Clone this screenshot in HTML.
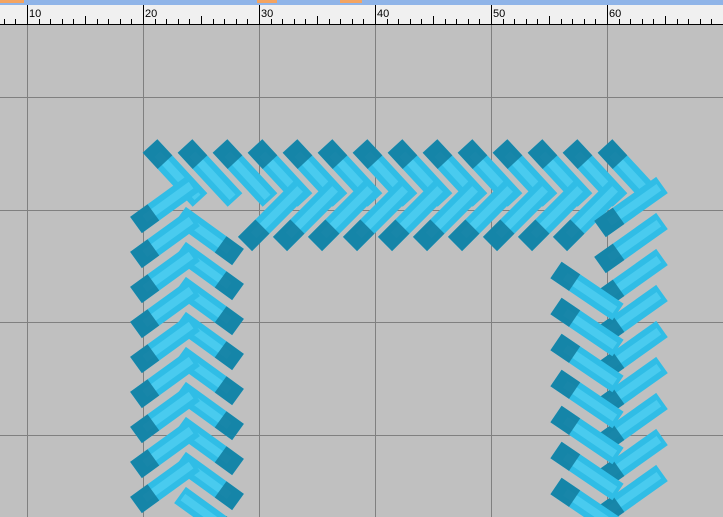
<!DOCTYPE html><html><head><style>
html,body{margin:0;padding:0;width:723px;height:517px;overflow:hidden;background:#c0c0c0}
svg{display:block}
</style></head><body>
<svg id="s" width="723" height="517" xmlns="http://www.w3.org/2000/svg" font-family="Liberation Sans, sans-serif">
<rect x="0" y="0" width="723" height="5" fill="#8fb4e8"/>
<rect x="0" y="5" width="723" height="20" fill="#f0f0f0"/>
<line x1="0" y1="24.5" x2="723" y2="24.5" stroke="#000"/>
<rect x="0" y="0" width="24" height="3" fill="#f4a460"/>
<rect x="257" y="0" width="20" height="3" fill="#f4a460"/>
<rect x="340" y="0" width="22" height="3" fill="#f4a460"/>
<g id="g"></g>
</svg>
<script>
var g=document.getElementById('g'),h='';
[27,143,259,375,491,607].forEach(function(x){h+='<line x1="'+(x+.5)+'" y1="25" x2="'+(x+.5)+'" y2="517" stroke="#808080"/>';});
[97,210,322,435].forEach(function(y){h+='<line x1="0" y1="'+(y+.5)+'" x2="723" y2="'+(y+.5)+'" stroke="#808080"/>';});
for(var i=-2;i<=60;i++){var x=27+i*11.6;if(x<0||x>723)continue;var L=(i%10==0)?19:(i%5==0?8:5);h+='<line x1="'+(Math.round(x)+.5)+'" y1="'+(24-L)+'" x2="'+(Math.round(x)+.5)+'" y2="24" stroke="#000"/>';
if(i%10==0)h+='<text x="'+(x+2)+'" y="17" font-size="11" fill="#000">'+(10+i)+'</text>';}
function bar(x1,y1,x2,y2){var dx=x2-x1,dy=y2-y1;
h+='<line x1="'+x1+'" y1="'+y1+'" x2="'+x2+'" y2="'+y2+'" stroke="#30bde6" stroke-width="20"/>';
h+='<line x1="'+(x1+dx*0.15)+'" y1="'+(y1+dy*0.15)+'" x2="'+(x2-dx*0.05)+'" y2="'+(y2-dy*0.05)+'" stroke="#5fd8f7" stroke-width="8" opacity=".55"/>';
h+='<line x1="'+x1+'" y1="'+y1+'" x2="'+(x1+dx*0.3)+'" y2="'+(y1+dy*0.3)+'" stroke="#137fa2" stroke-width="20" opacity=".9"/>';}
for(var i=0;i<14;i++){var x0=150+35*i;bar(x0,146,x0+50,200);}
for(var i=3;i<13;i++){var x0=150+35*i;bar(x0-10,244,x0+48,186);}
for(var k=0;k<9;k++){var y=225+35*k;bar(238,y+32,180,y-10);}
for(var k=0;k<9;k++){var y=225+35*k;bar(136,y,194,y-42);}
for(var k=0;k<9;k++){var y=185+36*k;bar(600,y+44,662,y);}
for(var k=0;k<7;k++){var y=270+36*k;bar(556,y,618,y+42);}
g.innerHTML=h;
</script>
</body></html>
